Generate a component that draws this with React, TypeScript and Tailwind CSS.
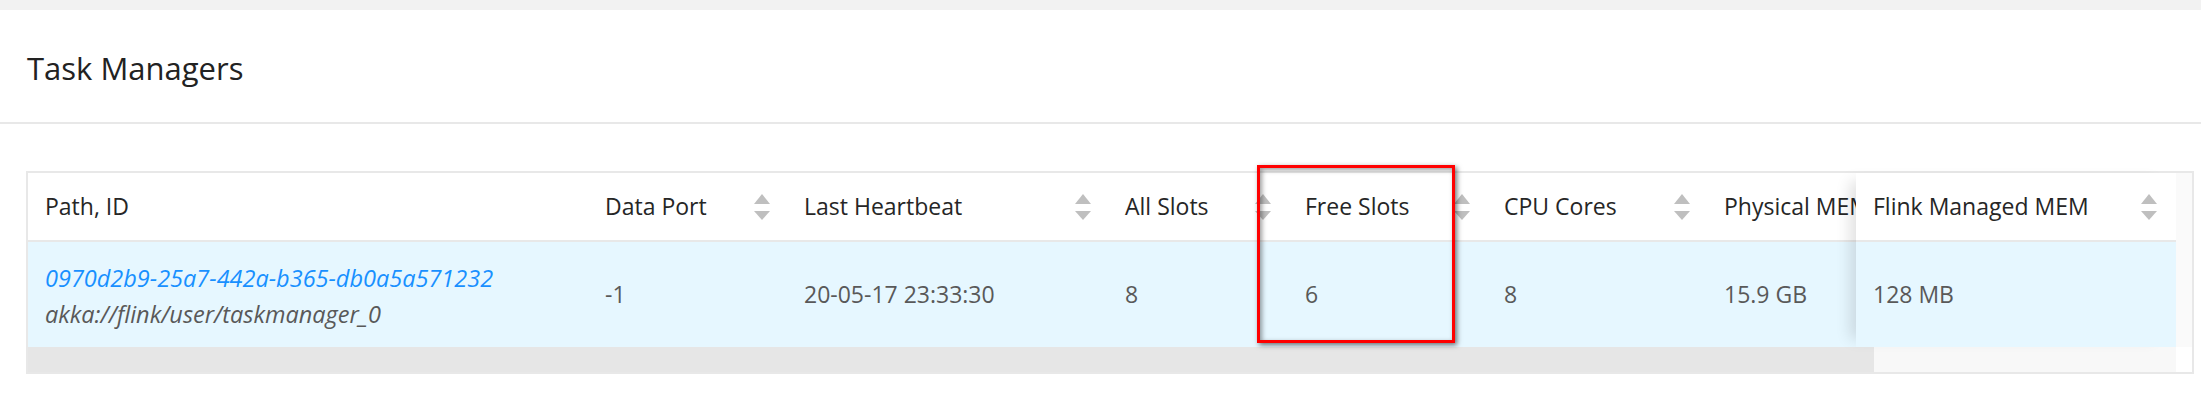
import React from "react";

const SortIcon = () => (
  <svg width="16" height="26" viewBox="0 0 16 26" className="shrink-0">
    <polygon points="0,10 8,0 16,10" fill="#bfbfbf" />
    <polygon points="0,17 16,17 8,26" fill="#bfbfbf" />
  </svg>
);

const columns = [
  { title: "Path, ID", width: "w-[560px]", sort: false },
  { title: "Data Port", width: "w-[199px]", sort: true },
  { title: "Last Heartbeat", width: "w-[321px]", sort: true },
  { title: "All Slots", width: "w-[180px]", sort: true },
  { title: "Free Slots", width: "w-[199px]", sort: true },
  { title: "CPU Cores", width: "w-[220px]", sort: true },
  { title: "Physical MEM", width: "w-[220px]", sort: true },
];

const values = ["-1", "20-05-17 23:33:30", "8", "6", "8", "15.9 GB"];

const App = () => {
  return (
    <div className="relative min-h-screen bg-white font-['Open_Sans',sans-serif]">
      <div className="h-[10px] bg-[#f2f2f2]" />

      {/* Card head */}
      <div className="h-[114px] border-b-2 border-[#e8e8e8] flex items-center pl-[27px] pt-[5px]">
        <h2 className="text-[31px] leading-none text-[#222222]">Task Managers</h2>
      </div>

      {/* Table */}
      <div className="pl-[26px] pt-[47px]">
        <div className="w-[2168px] border-2 border-[#e8e8e8]">
          <div className="flex">
            {/* scrolling part */}
            <div className="w-[1828px] overflow-hidden">
              <div className="flex w-max border-b-2 border-[#e8e8e8] bg-white">
                {columns.map((col) => (
                  <div
                    key={col.title}
                    className={`${col.width} h-[67px] shrink-0 flex items-center justify-between pl-[17px] pr-[17px] text-[23px] leading-[35px] text-[#262626] whitespace-nowrap`}
                  >
                    <span>{col.title}</span>
                    {col.sort && <SortIcon />}
                  </div>
                ))}
              </div>
              <div className="flex w-max bg-[#e6f7ff] h-[105px]">
                <div className="w-[560px] shrink-0 flex flex-col justify-center pl-[17px] pt-[2px] text-[23.5px] leading-[36px] italic whitespace-nowrap">
                  <span className="text-[#1890ff]">0970d2b9-25a7-442a-b365-db0a5a571232</span>
                  <span className="text-[#595959]">akka://flink/user/taskmanager_0</span>
                </div>
                {values.map((v, i) => (
                  <div
                    key={i}
                    className={`${columns[i + 1].width} shrink-0 flex items-center pl-[17px] text-[23px] leading-[35px] text-[#595959] whitespace-nowrap`}
                  >
                    {v}
                  </div>
                ))}
              </div>
            </div>

            {/* fixed right column */}
            <div className="relative z-10 w-[320px] shrink-0 shadow-[-14px_0_14px_-8px_rgba(0,0,0,0.12)]">
              <div className="h-[69px] border-b-2 border-[#e8e8e8] bg-white flex items-center justify-between pl-[17px] pr-[19px] text-[23px] leading-[35px] text-[#262626] whitespace-nowrap">
                <span>Flink Managed MEM</span>
                <SortIcon />
              </div>
              <div className="h-[105px] bg-[#e6f7ff] flex items-center pl-[17px] text-[23px] leading-[35px] text-[#595959]">
                128 MB
              </div>
            </div>

            <div className="w-[16px] shrink-0 bg-[#fafafa]" />
          </div>

          {/* horizontal scrollbar */}
          <div className="flex h-[25px]">
            <div className="w-[1846px] bg-[#e6e6e6]" />
            <div className="w-[302px] bg-[#f8f8f8]" />
            <div className="w-[16px] bg-white" />
          </div>
        </div>
      </div>

      {/* highlight box */}
      <div className="absolute left-[1257px] top-[165px] w-[198px] h-[178px] border-[3px] border-[#ff0000] shadow-[2px_2px_5px_rgba(0,0,0,0.55),inset_2px_2px_5px_rgba(0,0,0,0.4)] pointer-events-none" />
    </div>
  );
};

export default App;
